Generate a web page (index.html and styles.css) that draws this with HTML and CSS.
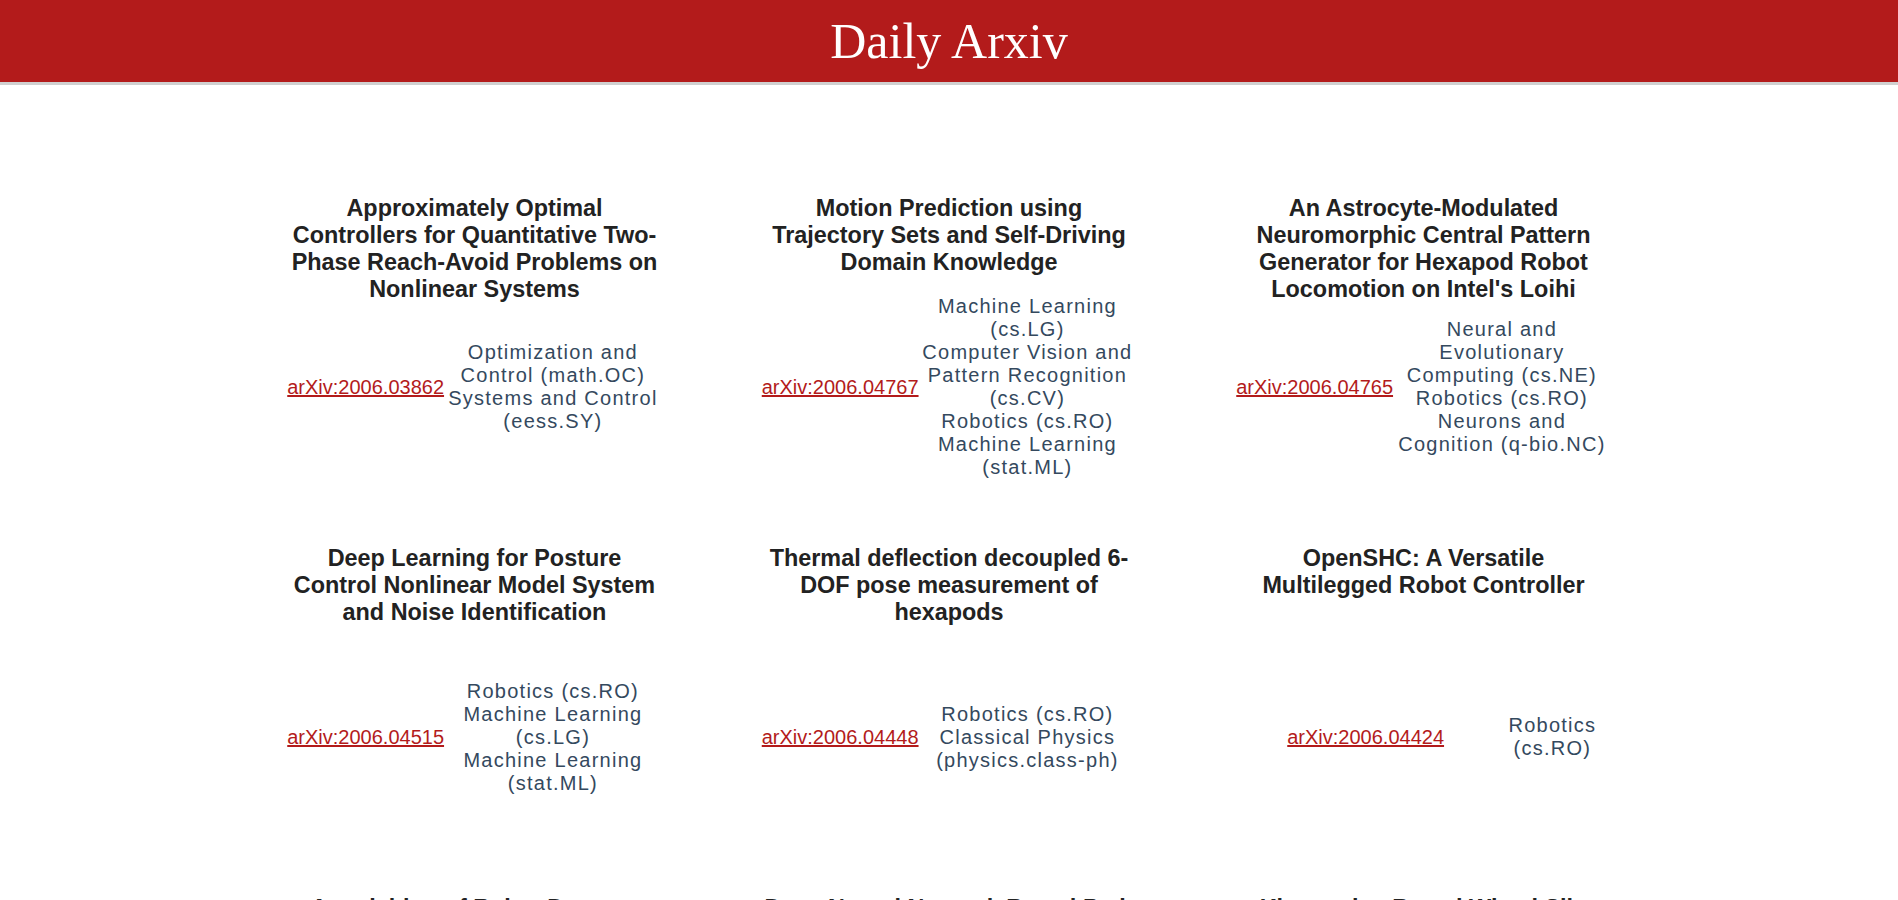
FILE: index.html
```html
<!DOCTYPE html>
<html lang="en">
<head>
<meta charset="utf-8">
<title>Daily Arxiv</title>
<link rel="stylesheet" href="styles.css">
</head>
<body>
<header class="topbar">
  <h1 class="topbar__title">Daily Arxiv</h1>
</header>
<main class="papers">
  <article class="paper">
    <h3 class="paper__title">Approximately Optimal Controllers for Quantitative Two-Phase Reach-Avoid Problems on Nonlinear Systems</h3>
    <div class="paper__meta">
      <a class="paper__link" href="#">arXiv:2006.03862</a>
      <div class="paper__cats">
        <div>Optimization and Control (math.OC)</div>
        <div>Systems and Control (eess.SY)</div>
      </div>
    </div>
  </article>
  <article class="paper">
    <h3 class="paper__title">Motion Prediction using Trajectory Sets and Self-Driving Domain Knowledge</h3>
    <div class="paper__meta">
      <a class="paper__link" href="#">arXiv:2006.04767</a>
      <div class="paper__cats">
        <div>Machine Learning (cs.LG)</div>
        <div>Computer Vision and Pattern Recognition (cs.CV)</div>
        <div>Robotics (cs.RO)</div>
        <div>Machine Learning (stat.ML)</div>
      </div>
    </div>
  </article>
  <article class="paper">
    <h3 class="paper__title">An Astrocyte-Modulated Neuromorphic Central Pattern Generator for Hexapod Robot Locomotion on Intel's Loihi</h3>
    <div class="paper__meta">
      <a class="paper__link" href="#">arXiv:2006.04765</a>
      <div class="paper__cats">
        <div>Neural and Evolutionary Computing (cs.NE)</div>
        <div>Robotics (cs.RO)</div>
        <div>Neurons and Cognition (q-bio.NC)</div>
      </div>
    </div>
  </article>
  <article class="paper">
    <h3 class="paper__title">Deep Learning for Posture Control Nonlinear Model System and Noise Identification</h3>
    <div class="paper__meta">
      <a class="paper__link" href="#">arXiv:2006.04515</a>
      <div class="paper__cats">
        <div>Robotics (cs.RO)</div>
        <div>Machine Learning (cs.LG)</div>
        <div>Machine Learning (stat.ML)</div>
      </div>
    </div>
  </article>
  <article class="paper">
    <h3 class="paper__title">Thermal deflection decoupled 6-DOF pose measurement of hexapods</h3>
    <div class="paper__meta">
      <a class="paper__link" href="#">arXiv:2006.04448</a>
      <div class="paper__cats">
        <div>Robotics (cs.RO)</div>
        <div>Classical Physics (physics.class-ph)</div>
      </div>
    </div>
  </article>
  <article class="paper">
    <h3 class="paper__title">OpenSHC: A Versatile Multilegged Robot Controller</h3>
    <div class="paper__meta paper__meta--spaced">
      <a class="paper__link" href="#">arXiv:2006.04424</a>
      <div class="paper__cats">
        <div>Robotics (cs.RO)</div>
      </div>
    </div>
  </article>
  <article class="paper">
    <h3 class="paper__title">Acquisition of Robot Damage Recovery Skills via Learning</h3>
    <div class="paper__meta">
      <a class="paper__link" href="#">arXiv:2006.04410</a>
      <div class="paper__cats">
        <div>Robotics (cs.RO)</div>
      </div>
    </div>
  </article>
  <article class="paper">
    <h3 class="paper__title">Deep Neural Network Based Path Planning for Mobile Robots</h3>
    <div class="paper__meta">
      <a class="paper__link" href="#">arXiv:2006.04398</a>
      <div class="paper__cats">
        <div>Robotics (cs.RO)</div>
      </div>
    </div>
  </article>
  <article class="paper">
    <h3 class="paper__title">Kinematics-Based Wheel Slip Estimation for Rovers</h3>
    <div class="paper__meta">
      <a class="paper__link" href="#">arXiv:2006.04375</a>
      <div class="paper__cats">
        <div>Robotics (cs.RO)</div>
      </div>
    </div>
  </article>
</main>
</body>
</html>
```

FILE: styles.css
```css
html, body {
  margin: 0;
  padding: 0;
}

body {
  font-family: "Liberation Sans", Arial, sans-serif;
  font-size: 20px;
  background: #ffffff;
  color: #222222;
}

.topbar {
  height: 82px;
  background: #b31b1b;
  border-bottom: 3px solid #d0d0d0;
  text-align: center;
}

.topbar__title {
  margin: 0;
  font-family: "Liberation Serif", "Times New Roman", serif;
  font-size: 50px;
  font-weight: normal;
  line-height: 82px;
  color: #ffffff;
}

.papers {
  width: 75%;
  margin: 0 auto;
  padding-top: 87px;
  display: grid;
  grid-template-columns: repeat(3, 1fr);
  grid-auto-rows: 350px;
}

.paper {
  padding: 0 50px;
  display: flex;
  flex-direction: column;
  min-width: 0;
}

.paper__title {
  margin: 23.4px 0 0;
  height: 108px;
  flex: none;
  font-size: 23.4px;
  font-weight: bold;
  line-height: normal;
  text-align: center;
  color: #222222;
}

.paper__meta {
  height: 168px;
  flex: none;
  display: flex;
  align-items: center;
}

.paper__link {
  flex: none;
  color: #b31b1b;
  text-decoration: underline;
}

.paper__cats {
  flex: 1;
  min-width: 0;
  text-align: center;
  letter-spacing: 1.25px;
  color: #34495e;
}

.paper__meta--spaced .paper__link {
  margin-left: 51px;
}

.paper__meta--spaced .paper__cats {
  padding-left: 50px;
}
```
